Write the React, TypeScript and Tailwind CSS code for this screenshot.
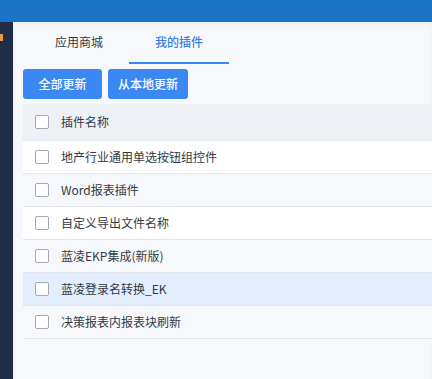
import { useState } from 'react';

const plugins = [
  '地产行业通用单选按钮组控件',
  'Word报表插件',
  '自定义导出文件名称',
  '蓝凌EKP集成(新版)',
  '蓝凌登录名转换_EK',
  '决策报表内报表块刷新',
];

function Box() {
  return <span className="block w-[14px] h-[14px] shrink-0 rounded-[2px] border border-[#a3a8b3] bg-white" />;
}

export default function App() {
  const [tab, setTab] = useState(1);
  const hovered = 4;

  return (
    <div
      className="w-full h-[379px] flex flex-col overflow-hidden text-[12px] text-[#333a45]"
      style={{ fontFamily: '"Noto Sans CJK SC", "Noto Sans", sans-serif' }}
    >
      <div className="h-[22px] shrink-0 bg-[#1a73c6]" />
      <div className="flex-1 flex min-h-0">
        {/* side nav, mostly scrolled out of view */}
        <div className="w-[13px] shrink-0 bg-[#1f2d48] pt-[12px]">
          <span className="block w-[3px] h-[7px] bg-[#e39a45]" />
        </div>
        <div className="flex-1 bg-[#f7f8fc] shadow-[inset_0_2px_3px_rgba(0,0,0,0.04)]">
          <div className="flex h-[42px] pl-[16px]">
            {['应用商城', '我的插件'].map((t, i) => (
              <button
                key={t}
                type="button"
                onClick={() => setTab(i)}
                className={`w-[100px] h-full flex items-center justify-center border-b-2 ${
                  i === tab ? 'border-[#3b88f5] text-[#3b7fe6] font-medium' : 'border-transparent text-[#333a45]'
                }`}
              >
                {t}
              </button>
            ))}
          </div>
          <div className="flex gap-[6px] pl-[10px] mt-[5px]">
            <button type="button" className="w-[79px] h-[30px] rounded-[3px] bg-[#3b88f5] text-white font-medium">
              全部更新
            </button>
            <button type="button" className="w-[80px] h-[30px] rounded-[3px] bg-[#3b88f5] text-white font-medium">
              从本地更新
            </button>
          </div>
          <div className="ml-[10px] mt-[5px]">
            <div className="h-[37px] flex items-center gap-[12px] pl-[12px] bg-[#edf0f5] border-b border-[#e3e5eb]">
              <Box />
              <span>插件名称</span>
            </div>
            {plugins.map((p, i) => (
              <div
                key={p}
                className={`h-[33px] flex items-center gap-[12px] pl-[12px] border-b border-[#e3e5eb] ${
                  i === hovered ? 'bg-[#e3edfd]' : i % 2 === 0 ? 'bg-white' : 'bg-[#f7f8fc]'
                }`}
              >
                <Box />
                <span>{p}</span>
              </div>
            ))}
          </div>
        </div>
      </div>
    </div>
  );
}
